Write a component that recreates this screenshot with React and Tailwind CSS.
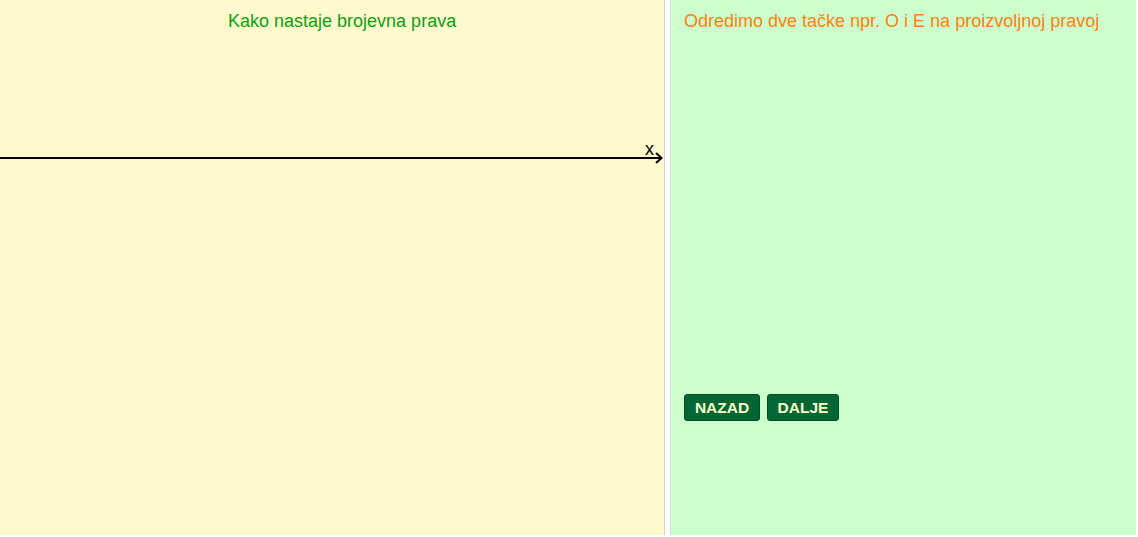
export default function App() {
  const font = { fontFamily: '"Liberation Sans", Arial, sans-serif' };
  return (
    <div className="flex h-[535px] w-[1136px] bg-white" style={font}>
      <div className="relative w-[665px] h-full bg-[#fff9cd] border-r border-[#d4d4d4]">
        <div className="pt-[11px] pl-[228px] text-[18px] leading-[20px] text-[#109e10] whitespace-nowrap">
          Kako nastaje brojevna prava
        </div>
        <svg className="absolute left-0 top-0" width="664" height="200" viewBox="0 0 664 200">
          <line x1="0" y1="158" x2="661" y2="158" stroke="#000" strokeWidth="2" />
          <polyline points="656,153 661.5,158 656,163" fill="none" stroke="#000" strokeWidth="2" />
          <text x="645" y="155" fontSize="18" fill="#000" fontFamily='"Liberation Sans", Arial, sans-serif'>x</text>
        </svg>
      </div>
      <div className="w-[5px] h-full bg-white" />
      <div className="w-[466px] h-full bg-[#ccffcc] border-l border-[#dcdcdc] flex flex-col pl-[13px]">
        <div className="pt-[11px] text-[18px] leading-[20px] text-[#ff7f0f] whitespace-nowrap">
          Odredimo dve tačke npr. O i E na proizvoljnoj pravoj
        </div>
        <div className="mt-[363px] flex gap-[7px]">
          <button className="w-[76px] h-[27px] rounded-[3px] bg-[#006633] border border-[#004d26] text-[#ffffcc] text-[15.5px] font-bold leading-none flex items-center justify-center">
            NAZAD
          </button>
          <button className="w-[72px] h-[27px] rounded-[3px] bg-[#006633] border border-[#004d26] text-[#ffffcc] text-[15.5px] font-bold leading-none flex items-center justify-center">
            DALJE
          </button>
        </div>
      </div>
    </div>
  );
}
